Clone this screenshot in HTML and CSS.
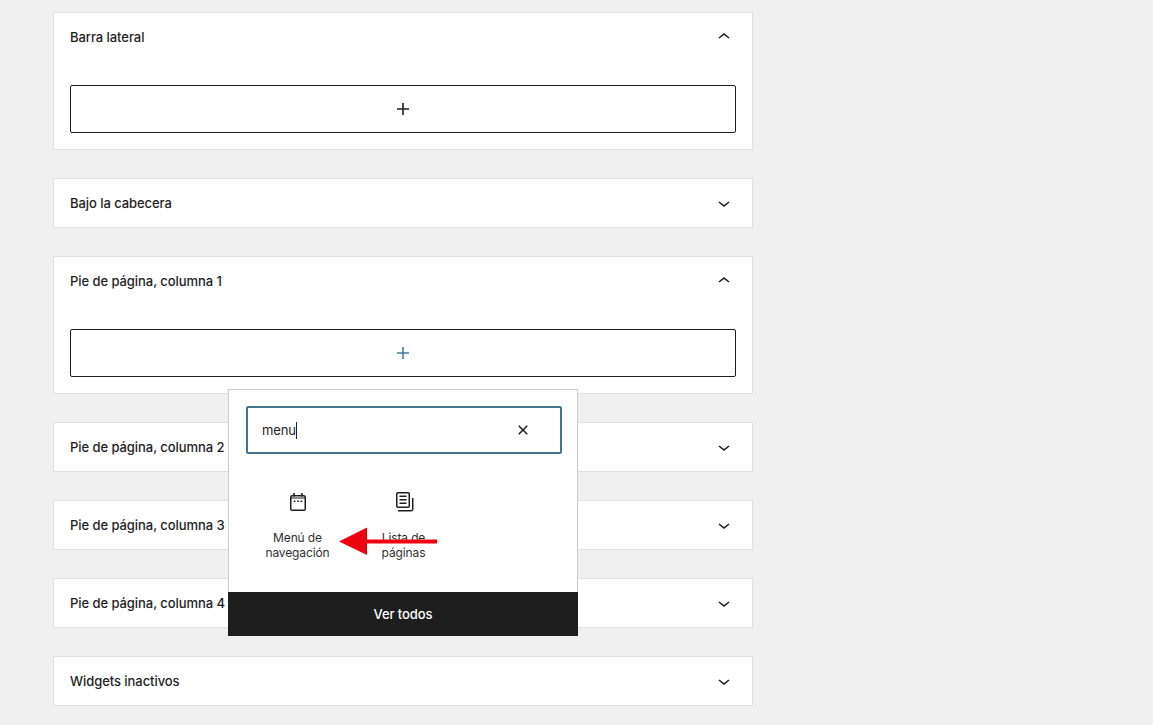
FILE: index.html
```html
<!DOCTYPE html>
<html lang="es">
<head>
<meta charset="utf-8">
<title>Widgets</title>
<link rel="stylesheet" href="styles.css">
</head>
<body>
<main class="page">
  <section class="area">
    <header class="area-head"><h2>Barra lateral</h2>
      <svg class="chev" viewBox="0 0 24 24"><path d="M6.5 12.4L12 8l5.5 4.4-.9 1.2L12 10l-4.500 3.600-1-1.200z"/></svg></header>
    <div class="area-body"><button class="adder"><svg viewBox="0 0 24 24"><path d="M18 11.200h-5.200V6h-1.600v5.200H6v1.600h5.200V18h1.600v-5.200H18z"/></svg></button></div>
  </section>
  <section class="area">
    <header class="area-head"><h2>Bajo la cabecera</h2>
      <svg class="chev" viewBox="0 0 24 24"><path d="M17.500 11.600L12 16l-5.500-4.400.9-1.200L12 14l4.500-3.600 1 1.200z"/></svg></header>
  </section>
  <section class="area">
    <header class="area-head"><h2>Pie de página, columna 1</h2>
      <svg class="chev" viewBox="0 0 24 24"><path d="M6.5 12.4L12 8l5.5 4.4-.9 1.2L12 10l-4.500 3.600-1-1.200z"/></svg></header>
    <div class="area-body"><button class="adder adder-active"><svg viewBox="0 0 24 24"><path d="M18 11.200h-5.200V6h-1.600v5.200H6v1.600h5.200V18h1.600v-5.200H18z"/></svg></button></div>
  </section>
  <section class="area">
    <header class="area-head"><h2>Pie de página, columna 2</h2>
      <svg class="chev" viewBox="0 0 24 24"><path d="M17.500 11.600L12 16l-5.500-4.400.9-1.200L12 14l4.500-3.600 1 1.200z"/></svg></header>
  </section>
  <section class="area">
    <header class="area-head"><h2>Pie de página, columna 3</h2>
      <svg class="chev" viewBox="0 0 24 24"><path d="M17.500 11.600L12 16l-5.500-4.400.9-1.200L12 14l4.500-3.600 1 1.200z"/></svg></header>
  </section>
  <section class="area">
    <header class="area-head"><h2>Pie de página, columna 4</h2>
      <svg class="chev" viewBox="0 0 24 24"><path d="M17.500 11.600L12 16l-5.500-4.400.9-1.200L12 14l4.500-3.600 1 1.200z"/></svg></header>
  </section>
  <section class="area">
    <header class="area-head"><h2>Widgets inactivos</h2>
      <svg class="chev" viewBox="0 0 24 24"><path d="M17.500 11.600L12 16l-5.500-4.400.9-1.200L12 14l4.500-3.600 1 1.200z"/></svg></header>
  </section>

  <div class="popover">
    <div class="popover-main">
      <div class="search">
        <span class="search-text">menu</span><span class="caret"></span>
        <svg class="search-x" viewBox="0 0 24 24"><path d="M12 13.060l3.710 3.710 1.060-1.060L13.060 12l3.710-3.710-1.060-1.060L12 10.940 8.290 7.230 7.230 8.290 10.940 12l-3.710 3.710 1.060 1.060z"/></svg>
      </div>
      <div class="results">
        <div class="result">
          <svg viewBox="0 0 24 24"><rect class="cal-frame" x="4.750" y="5.750" width="14.500" height="14.500" rx="1.500"/><path d="M7.250 3h1.600v3.500h-1.600zM15.150 3h1.600v3.500h-1.600zM4.750 7.500h14.500v1h-14.500zM7.800 10.500h1.600v1.600H7.800zM11.200 10.500h1.600v1.600h-1.600zM14.600 10.500h1.600v1.600h-1.600z"/></svg>
          <span>Menú de navegación</span>
        </div>
        <div class="result">
          <svg viewBox="0 0 24 24"><path d="M14.500 5.500h-7V7h7V5.500ZM7.500 9h7v1.500h-7V9Zm7 3.500h-7V14h7v-1.500Z"/><path fill-rule="evenodd" d="M16 2H6a2 2 0 0 0-2 2v12a2 2 0 0 0 2 2h10a2 2 0 0 0 2-2V4a2 2 0 0 0-2-2ZM6 3.500h10a.5.5 0 0 1 .5.5v12a.5.5 0 0 1-.5.5H6a.5.5 0 0 1-.5-.5V4a.5.5 0 0 1 .5-.5Z"/><path d="M20 8v11c0 .69-.31 1-.999 1H6v1.500h13.001c1.520 0 2.499-.982 2.499-2.500V8H20Z"/></svg>
          <span>Lista de páginas</span>
        </div>
      </div>
    </div>
    <button class="see-all">Ver todos</button>
  </div>

  <svg class="arrow" viewBox="0 0 100 30"><path d="M0 14.500L28 0.500V12.500H98V16.500H28V28Z"/></svg>
</main>
</body>
</html>
```

FILE: styles.css
```css
* { box-sizing: border-box; }
html, body { margin: 0; height: 725px; overflow: hidden; }
body { background: #f0f0f0; font-family: Inter, "Liberation Sans", sans-serif; font-size: 13px; color: #1e1e1e; }
.page { position: relative; width: 1153px; height: 725px; padding: 12px 0 0 53px; display: flex; flex-direction: column; gap: 28px; }
.area { width: 700px; background: #fff; border: 1px solid #e0e0e0; }
.area-head { height: 48px; padding: 0 16px; display: flex; align-items: center; justify-content: space-between; }
.area-head h2 { margin: 0; font-size: 13px; font-weight: 450; letter-spacing: -0.06px; }
.chev { width: 24px; height: 24px; fill: #1e1e1e; display: block; }
.area-body { padding: 24px 16px 16px; }
.adder { display: flex; align-items: center; justify-content: center; width: 100%; height: 48px; background: #fff; border: 1px solid #1e1e1e; border-radius: 2px; padding: 0; }
.adder svg { width: 24px; height: 24px; fill: #1e1e1e; }
.adder-active svg { fill: #3f7f9b; }
.popover { position: absolute; left: 228px; top: 389px; width: 350px; height: 247px; background: #fff; border: 1px solid #ccc; display: flex; flex-direction: column; }
.popover-main { flex: 1; padding: 16px 15px 0 17px; }
.search { position: relative; display: flex; align-items: center; height: 48px; width: 316px; border: 2px solid #44748f; border-radius: 2px; padding-left: 14px; color: #1e1e1e; }
.search-text { font-size: 13px; letter-spacing: -0.1px; }
.caret { width: 1px; height: 17px; background: #1e1e1e; }
.search-x { position: absolute; right: 25px; top: 10px; width: 24px; height: 24px; fill: #1e1e1e; }
.results { display: grid; grid-template-columns: repeat(3, 106px); margin: 24px 0 0 -1.5px; }
.result { display: flex; flex-direction: column; align-items: center; text-align: center; padding: 12px 16px; font-size: 12px; line-height: 15px; color: #2f2f2f; letter-spacing: -0.12px; }
.result svg { width: 24px; height: 24px; fill: #1e1e1e; margin-bottom: 16px; flex: none; }
.cal-frame { fill: none; stroke: #1e1e1e; stroke-width: 1.5; }
.see-all { margin: 0 -1px -1px; height: 44px; background: #1e1e1e; color: #fff; border: 0; font: 450 13px Inter, "Liberation Sans", sans-serif; letter-spacing: -0.1px; }
.arrow { position: absolute; left: 339px; top: 527px; width: 100px; height: 30px; fill: #ec0010; }
```
